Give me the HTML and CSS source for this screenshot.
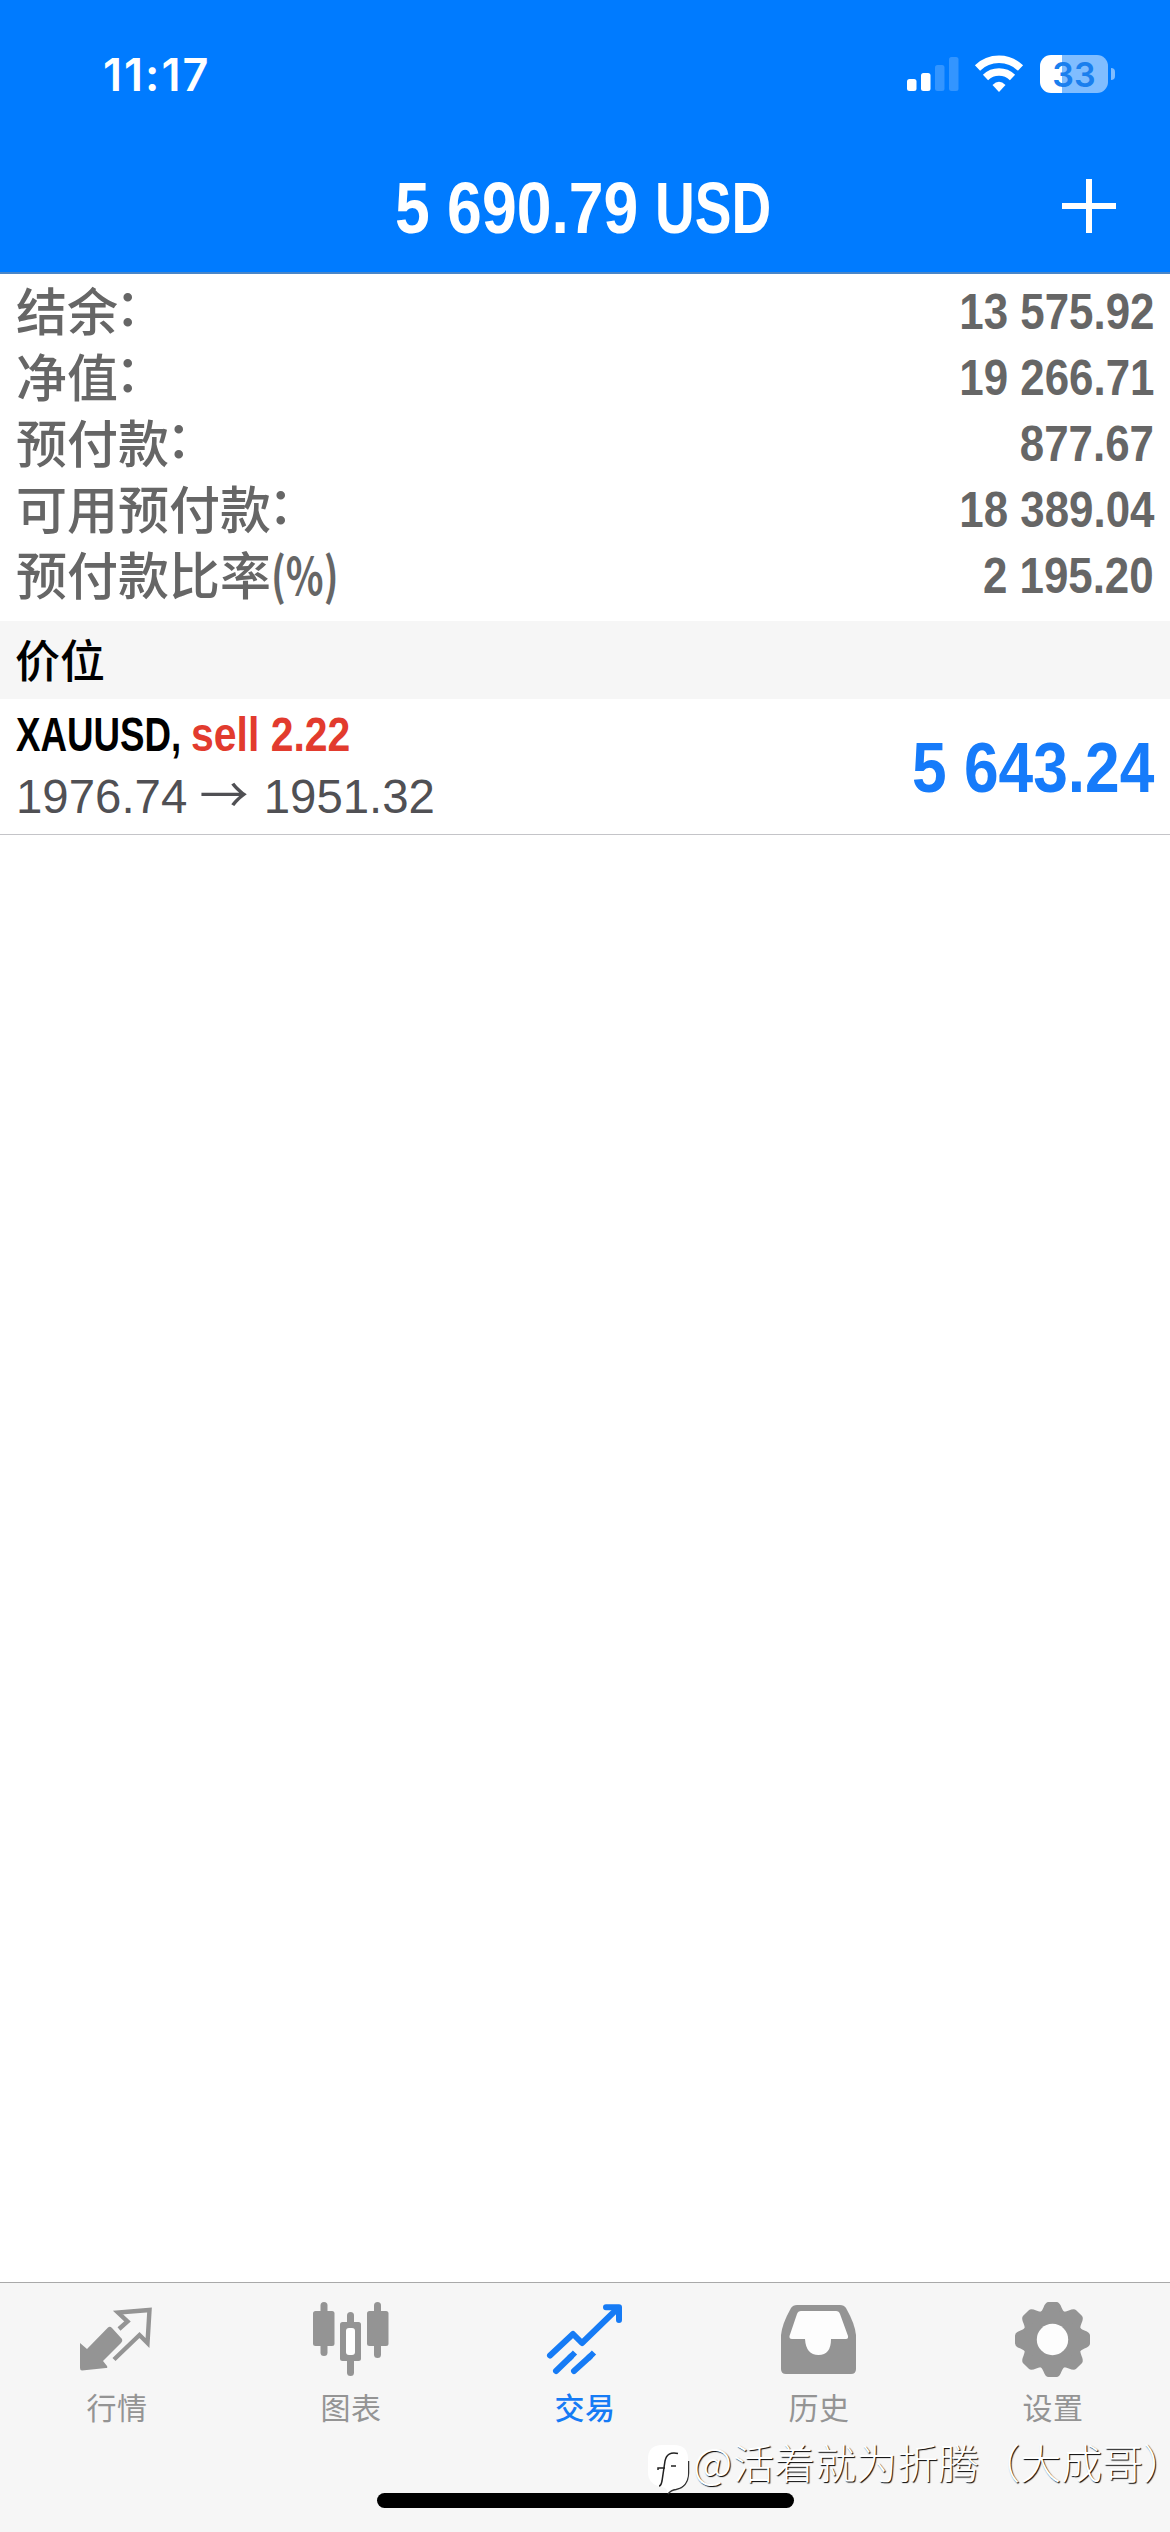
FILE: index.html
```html
<!DOCTYPE html>
<html lang="zh-CN">
<head>
    <meta charset="UTF-8">
    <meta name="viewport" content="width=device-width, initial-scale=1.0">
    <title>交易</title>
    <link rel="stylesheet" href="styles.css">
</head>
<body>
    <header class="header">
        <div class="status-bar">
            <div class="time">11:17</div>
            <div class="status-icons">
                <svg class="signal" width="52" height="38" viewBox="0 0 52 38" fill="#fff">
                    <rect x="0" y="24" width="9.500" height="12" rx="2.500"/>
                    <rect x="14" y="18" width="9.500" height="18" rx="2.500"/>
                    <rect x="28" y="10" width="9.500" height="26" rx="2.500" opacity="0.2"/>
                    <rect x="42" y="2" width="9.500" height="34" rx="2.500" opacity="0.2"/>
                </svg>
                <svg class="wifi" width="50" height="38" viewBox="0 0 50 38" fill="none" stroke="#fff" stroke-width="7.500">
                    <path d="M3.500 13 A31 31 0 0 1 46.500 13"/>
                    <path d="M11.500 22.500 A19.500 19.500 0 0 1 38.500 22.500"/>
                    <path d="M25 37 L18.500 30 Q25 23.500 31.500 30 Z" fill="#fff" stroke="none"/>
                </svg>
                <div class="battery"><span>33</span></div>
                <div class="battery-cap"></div>
            </div>
        </div>
        <div class="title-bar">
            <h1><span class="narrow amount">5 690.79</span><span class="narrow currency">USD</span></h1>
            <button class="add-button" aria-label="add">
                <svg width="54" height="54" viewBox="0 0 54 54"><path d="M27 0V54M0 27H54" stroke="#fff" stroke-width="6"/></svg>
            </button>
        </div>
    </header>

    <main>
        <div class="account">
            <div class="row"><span>结余<i class="colon">：</i></span><b class="narrow">13 575.92</b></div>
            <div class="row"><span>净值<i class="colon">：</i></span><b class="narrow">19 266.71</b></div>
            <div class="row"><span>预付款<i class="colon">：</i></span><b class="narrow">877.67</b></div>
            <div class="row"><span>可用预付款<i class="colon">：</i></span><b class="narrow">18 389.04</b></div>
            <div class="row"><span>预付款比率<i class="percent">(%)</i></span><b class="narrow">2 195.20</b></div>
        </div>

        <h2 class="section-title">价位</h2>

        <div class="position">
            <div class="position-info">
                <div class="symbol"><span class="narrow name">XAUUSD,</span><span class="narrow sell">sell 2.22</span></div>
                <div class="prices">1976.74 <span class="arrow">→</span> 1951.32</div>
            </div>
            <div class="profit narrow">5 643.24</div>
        </div>
    </main>

    <nav class="tab-bar">
        <a class="tab">
            <svg width="80" height="80" viewBox="0 0 80 80" fill="currentColor">
                <path d="M3 36 L10 42 L31 20.500 Q33 19 35 21 L45 32 Q46 34 44 36 L26 54 L30 59 Q31 61 29 61 L5 63.500 Q3 63.500 3 61 Z"/>
                <path d="M42 22 L50.500 14.500 L41 5.500 L72.500 3 L70.500 36 L62.500 28 L37 52.500" fill="none" stroke="currentColor" stroke-width="4.400"/>
            </svg>
            <span>行情</span>
        </a>
        <a class="tab">
            <svg width="80" height="80" viewBox="0 0 80 80" fill="currentColor">
                <rect x="2" y="4" width="21.500" height="35" rx="2.500"/>
                <rect x="9.500" y="-5" width="7" height="54" rx="3.500"/>
                <rect x="56" y="4" width="21.500" height="35" rx="2.500"/>
                <rect x="63" y="-5" width="7" height="56" rx="3.500"/>
                <rect x="36" y="5" width="7" height="20" rx="3.500"/>
                <rect x="36" y="50" width="7" height="19" rx="3.500"/>
                <rect x="29" y="15" width="21" height="39" rx="2.500"/>
                <rect x="35" y="21" width="9" height="27" rx="3" fill="#fff"/>
            </svg>
            <span>图表</span>
        </a>
        <a class="tab active">
            <svg width="80" height="80" viewBox="0 0 80 80" fill="none" stroke="currentColor" stroke-width="6" stroke-linecap="round" stroke-linejoin="round">
                <path d="M5 48.500 L28 27 L37 36 L72 2"/>
                <path d="M61 0.200 H74 V13"/>
                <path d="M11 64 L26 49.500 M29 64 L45 49.500"/>
                <path d="M24 51.500 L30 45.500 M43 51.500 L49 45.500" stroke-linecap="butt"/>
            </svg>
            <span>交易</span>
        </a>
        <a class="tab">
            <svg width="80" height="80" viewBox="0 0 80 80">
                <path d="M18 -2 H61 Q65 -2 67 1 Q76 17 77 28 V62 Q77 67 72 67 H7 Q2 67 2 62 V28 Q3 17 12 1 Q14 -2 18 -2 Z" fill="currentColor"/>
                <path d="M22 4 H57 Q60 4 61 7 L69 29 Q69.500 32 67 32 H52 Q52 48 39.500 48 Q27 48 26 32 H13 Q10 32 10.500 29 L18 7 Q19 4 22 4 Z" fill="#fdfdfd"/>
            </svg>
            <span>历史</span>
        </a>
        <a class="tab">
            <svg width="80" height="80" viewBox="-40 -40 80 80">
                <g fill="currentColor" transform="translate(-0.500 -7.500)">
                    <circle r="30"/>
                    <g id="teeth">
                        <path id="tooth" d="M-15 -25 Q-11 -27 -9 -32 Q-7 -37.500 -4 -37.500 H4 Q7 -37.500 9 -32 Q11 -27 15 -25 Z"/>
                        <use href="#tooth" transform="rotate(45)"/>
                        <use href="#tooth" transform="rotate(90)"/>
                        <use href="#tooth" transform="rotate(135)"/>
                    </g>
                    <use href="#teeth" transform="rotate(180)"/>
                    <circle r="15.700" fill="#fdfdfd"/>
                </g>
            </svg>
            <span>设置</span>
        </a>
        <div class="home-indicator"></div>
        <div class="watermark">
            <svg width="44" height="50" viewBox="0 0 44 50">
                <path d="M20 49 Q23 45 28 44.500 Q40 42 40.500 28 V16" fill="none" stroke="#333" stroke-width="1.500"/>
                <path d="M14 0 H26 Q40 0 40 14 V27 Q40 42 27 43.500 Q22 44 19 48 Q20 43 14 42 Q0 40 0 27 V14 Q0 0 14 0 Z" fill="#fff"/>
                <path d="M30 8.500 Q19 6 17 16 L14 36 Q13 41 11 41 M10 25 V23 H17 M23 21 H28" fill="none" stroke="#222" stroke-width="1.500"/>
            </svg>
            <span><i class="at">@</i>活着就为折腾（大成哥）</span>
        </div>
    </nav>
</body>
</html>
```
FILE: styles.css
```css
/* Base */
* {
    box-sizing: border-box;
}

body {
    margin: 0;
    width: 1170px;
    height: 2532px;
    display: flex;
    flex-direction: column;
    overflow: hidden;
    background: #fff;
    font-family: "Liberation Sans", "Noto Sans CJK SC", sans-serif;
}

i {
    font-style: normal;
}

/* Condensed bold figures */
.narrow {
    display: block;
    font-family: "Liberation Sans", sans-serif;
    font-weight: bold;
    white-space: nowrap;
    transform: scaleX(0.877);
    transform-origin: right;
}

/* Header */
.header {
    height: 274px;
    background: #007bff;
    border-bottom: 2px solid #4a86c8;
    color: #fff;
}

.status-bar {
    height: 148px;
    display: flex;
    justify-content: space-between;
    padding: 0 55px 0 103px;
    align-items: center;
}

.time {
    font-family: Inter, sans-serif;
    font-weight: 600;
    font-size: 45px;
    letter-spacing: 2px;
}

.status-icons {
    display: flex;
    align-items: center;
}

.wifi {
    margin: 0 16px 0 15px;
}

.battery {
    width: 68px;
    height: 38px;
    border-radius: 11px;
    background: linear-gradient(to right, #fff 22px, #80bdff 22px);
    color: #1a7fee;
    font: 600 34px/39px Inter, sans-serif;
    text-align: center;
}

.battery-cap {
    width: 4px;
    height: 12px;
    margin-left: 3px;
    border-radius: 0 5px 5px 0;
    background: #80bdff;
}

.title-bar {
    height: 124px;
    display: grid;
    grid-template-columns: 1fr auto 1fr;
    align-items: center;
    padding-bottom: 8px;
}

.title-bar h1 {
    grid-column: 2;
    display: flex;
    width: 380px;
    margin: 3px 0 0;
    font-size: 72px;
    line-height: 80px;
}

.amount {
    width: 260px;
    transform: scaleX(0.868);
    transform-origin: left;
}

.currency {
    width: 120px;
    transform: scaleX(0.765);
    transform-origin: left;
}

.add-button {
    justify-self: end;
    margin-right: 54px;
    padding: 0;
    border: none;
    background: none;
    line-height: 0;
}

/* Account summary */
.account {
    height: 347px;
    padding: 5px 16px 0;
}

.row {
    height: 66px;
    display: flex;
    justify-content: space-between;
    align-items: center;
    font: 500 51px/66px "Noto Sans CJK SC", sans-serif;
    color: #666;
}

.row > span {
    margin-top: -6px;
}

.row .colon {
    margin-left: -3px;
    line-height: 1;
    vertical-align: 5px;
}

.row .percent {
    display: inline-block;
    font-weight: 700;
    transform: scaleX(0.77);
    transform-origin: left;
}

.row b {
    font-size: 50px;
}

.section-title {
    height: 78px;
    margin: 0;
    padding-left: 15px;
    background: #f6f6f6;
    font: 500 45px/76px "Noto Sans CJK SC", sans-serif;
}

/* Open position */
.position {
    height: 136px;
    display: flex;
    justify-content: space-between;
    align-items: center;
    padding: 0 16px;
    border-bottom: 1px solid #c4c4c8;
}

.symbol {
    display: flex;
    height: 62px;
    font-size: 48px;
    line-height: 60px;
}

.name {
    width: 175px;
    transform: scaleX(0.765);
    transform-origin: left;
}

.sell {
    color: #e23b2e;
    transform: scaleX(0.853);
    transform-origin: left;
}

.prices {
    height: 62px;
    font-size: 47.4px;
    line-height: 60px;
    color: #505054;
}

.arrow {
    margin: 0 2px 0 -1px;
    font-family: "Noto Sans CJK SC", sans-serif;
    font-size: 49px;
    line-height: 1;
}

.profit {
    margin-top: 2px;
    font-size: 71px;
    color: #167bfa;
}

/* Tab bar */
.tab-bar {
    position: relative;
    height: 250px;
    margin-top: auto;
    display: flex;
    background: #f6f6f6;
    border-top: 1px solid #a9a9a9;
}

.tab {
    flex: 1;
    display: flex;
    flex-direction: column;
    align-items: center;
    padding-top: 24px;
    color: #949494;
    font: 400 30px/38px "Noto Sans CJK SC", sans-serif;
    letter-spacing: 0.5px;
}

.tab svg {
    overflow: visible;
}

.tab.active {
    color: #167bf5;
    font-weight: 500;
}

.home-indicator {
    position: absolute;
    left: 377px;
    bottom: 24px;
    width: 417px;
    height: 15px;
    border-radius: 8px;
    background: #000;
}

.watermark {
    position: absolute;
    left: 648px;
    bottom: 37px;
    display: flex;
    align-items: center;
    color: #fff;
    font: 300 41px/54px "Noto Sans CJK SC", sans-serif;
    text-shadow: 1px 1px 1px #000;
    white-space: nowrap;
}

.watermark span {
    margin: -18px 0 0 1px;
}

.at {
    margin-right: 1px;
    font-size: 43px;
    line-height: 1;
}
```
